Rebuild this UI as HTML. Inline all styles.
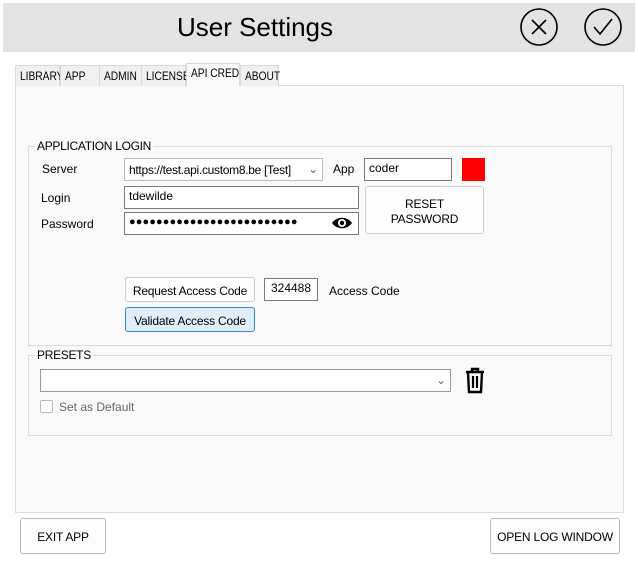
<!DOCTYPE html>
<html><head><style>
*{box-sizing:border-box;margin:0;padding:0}
body{width:638px;height:572px;background:#fff;font-family:"Liberation Sans",sans-serif;font-size:12px;color:#000;position:relative;overflow:hidden}
.a{position:absolute;white-space:nowrap}
.hdr{left:3px;top:3px;width:632px;height:49px;background:#e3e3e3}
.title{left:0;width:510px;top:12px;text-align:center;font-size:26px}
.tab{top:65px;height:21px;border:1px solid #d9d9d9;border-bottom:none;background:#f0f0f0;font-size:12px;padding:3px 0 0 4px}
.tab span{display:inline-block;transform:scaleX(0.85);transform-origin:left}
.panel{left:15px;top:85px;width:609px;height:428px;background:#f9f9f9;border:1px solid #dcdcdc}
.grp{border:1px solid #dcdcdc}
.glbl{background:#f9f9f9;padding:0 2px;font-size:12px;letter-spacing:-0.3px}
.in{background:#fff;border:1px solid #7a7a7a;padding:2px 4px;font-size:12px}
.btn{background:#fdfdfd;border:1px solid #cfcfcf;border-radius:3px;text-align:center;font-size:12px;letter-spacing:-0.2px}
</style></head><body>
<div class="a hdr"></div>
<div class="a title">User Settings</div>
<svg class="a" style="left:519px;top:7px" width="40" height="40"><circle cx="20" cy="20" r="18" fill="none" stroke="#000" stroke-width="1.6"/><path d="M13 13L27 27M27 13L13 27" stroke="#000" stroke-width="1.6"/></svg>
<svg class="a" style="left:583px;top:7px" width="40" height="40"><circle cx="20" cy="20" r="18" fill="none" stroke="#000" stroke-width="1.6"/><path d="M11 20L17 27L29 12" fill="none" stroke="#000" stroke-width="1.6"/></svg>
<div class="a panel"></div>
<div class="a tab" style="left:15px;width:45px"><span>LIBRARY</span></div>
<div class="a tab" style="left:60px;width:40px"><span>APP</span></div>
<div class="a tab" style="left:100px;width:42px;border-left:none"><span>ADMIN</span></div>
<div class="a tab" style="left:141px;width:45px"><span>LICENSE</span></div>
<div class="a tab" style="left:186px;top:63px;height:23px;width:54px;background:#f9f9f9;padding-top:2px"><span>API CRED</span></div>
<div class="a tab" style="left:240px;width:39px"><span>ABOUT</span></div>

<div class="a grp" style="left:28px;top:146px;width:584px;height:200px"></div>
<div class="a glbl" style="left:35px;top:139px">APPLICATION LOGIN</div>
<div class="a" style="left:42px;top:162px">Server</div>
<div class="a in" style="left:124px;top:158px;width:199px;height:23px;border-color:#bbb;padding-top:4px;letter-spacing:-0.3px">https://test.api.custom8.be [Test]<span style="position:absolute;right:4px;top:3px;color:#666">&#8964;</span></div>
<div class="a" style="left:333px;top:162px">App</div>
<div class="a in" style="left:364px;top:158px;width:88px;height:23px">coder</div>
<div class="a" style="left:462px;top:158px;width:23px;height:23px;background:#f00"></div>
<div class="a" style="left:41px;top:191px">Login</div>
<div class="a in" style="left:124px;top:186px;width:235px;height:23px">tdewilde</div>
<div class="a" style="left:41px;top:217px">Password</div>
<div class="a in" style="left:124px;top:212px;width:235px;height:23px;font-size:11px;letter-spacing:0.1px;padding-top:3px">&#9679;&#9679;&#9679;&#9679;&#9679;&#9679;&#9679;&#9679;&#9679;&#9679;&#9679;&#9679;&#9679;&#9679;&#9679;&#9679;&#9679;&#9679;&#9679;&#9679;&#9679;&#9679;&#9679;&#9679;&#9679;</div>
<svg class="a" style="left:330px;top:215px" width="24" height="16"><path d="M2 8C7 1 17 1 22 8C17 15 7 15 2 8Z" fill="#000"/><circle cx="12" cy="8" r="4" fill="#fff"/><circle cx="12" cy="8" r="2.2" fill="#000"/></svg>
<div class="a btn" style="left:365px;top:186px;width:119px;height:48px;padding-top:10px;line-height:15px">RESET<br>PASSWORD</div>
<div class="a btn" style="left:125px;top:277px;width:130px;height:25px;padding-top:6px">Request Access Code</div>
<div class="a in" style="left:264px;top:278px;width:54px;height:23px;text-align:center">324488</div>
<div class="a" style="left:329px;top:284px">Access Code</div>
<div class="a btn" style="left:125px;top:307px;width:130px;height:25px;padding-top:6px;background:#e0eef9;border-color:#3b86d0">Validate Access Code</div>

<div class="a grp" style="left:28px;top:355px;width:584px;height:81px"></div>
<div class="a glbl" style="left:35px;top:348px">PRESETS</div>
<div class="a in" style="left:40px;top:369px;width:411px;height:23px;border-color:#999"><span style="position:absolute;right:4px;top:3px;color:#666">&#8964;</span></div>
<svg class="a" style="left:463px;top:366px" width="24" height="28"><path d="M3 6H21M9 6V3H15V6M5 6L6 26H18L19 6" fill="none" stroke="#000" stroke-width="2.4"/><path d="M10 10V22M14 10V22" stroke="#000" stroke-width="2.2"/></svg>
<div class="a" style="left:40px;top:400px;width:13px;height:13px;border:1px solid #bbb;border-radius:2px;background:#fff"></div>
<div class="a" style="left:59px;top:400px;color:#666">Set as Default</div>

<div class="a btn" style="left:20px;top:518px;width:86px;height:36px;padding-top:11px;border-color:#bbb">EXIT APP</div>
<div class="a btn" style="left:490px;top:518px;width:130px;height:36px;padding-top:11px;border-color:#bbb">OPEN LOG WINDOW</div>
</body></html>
